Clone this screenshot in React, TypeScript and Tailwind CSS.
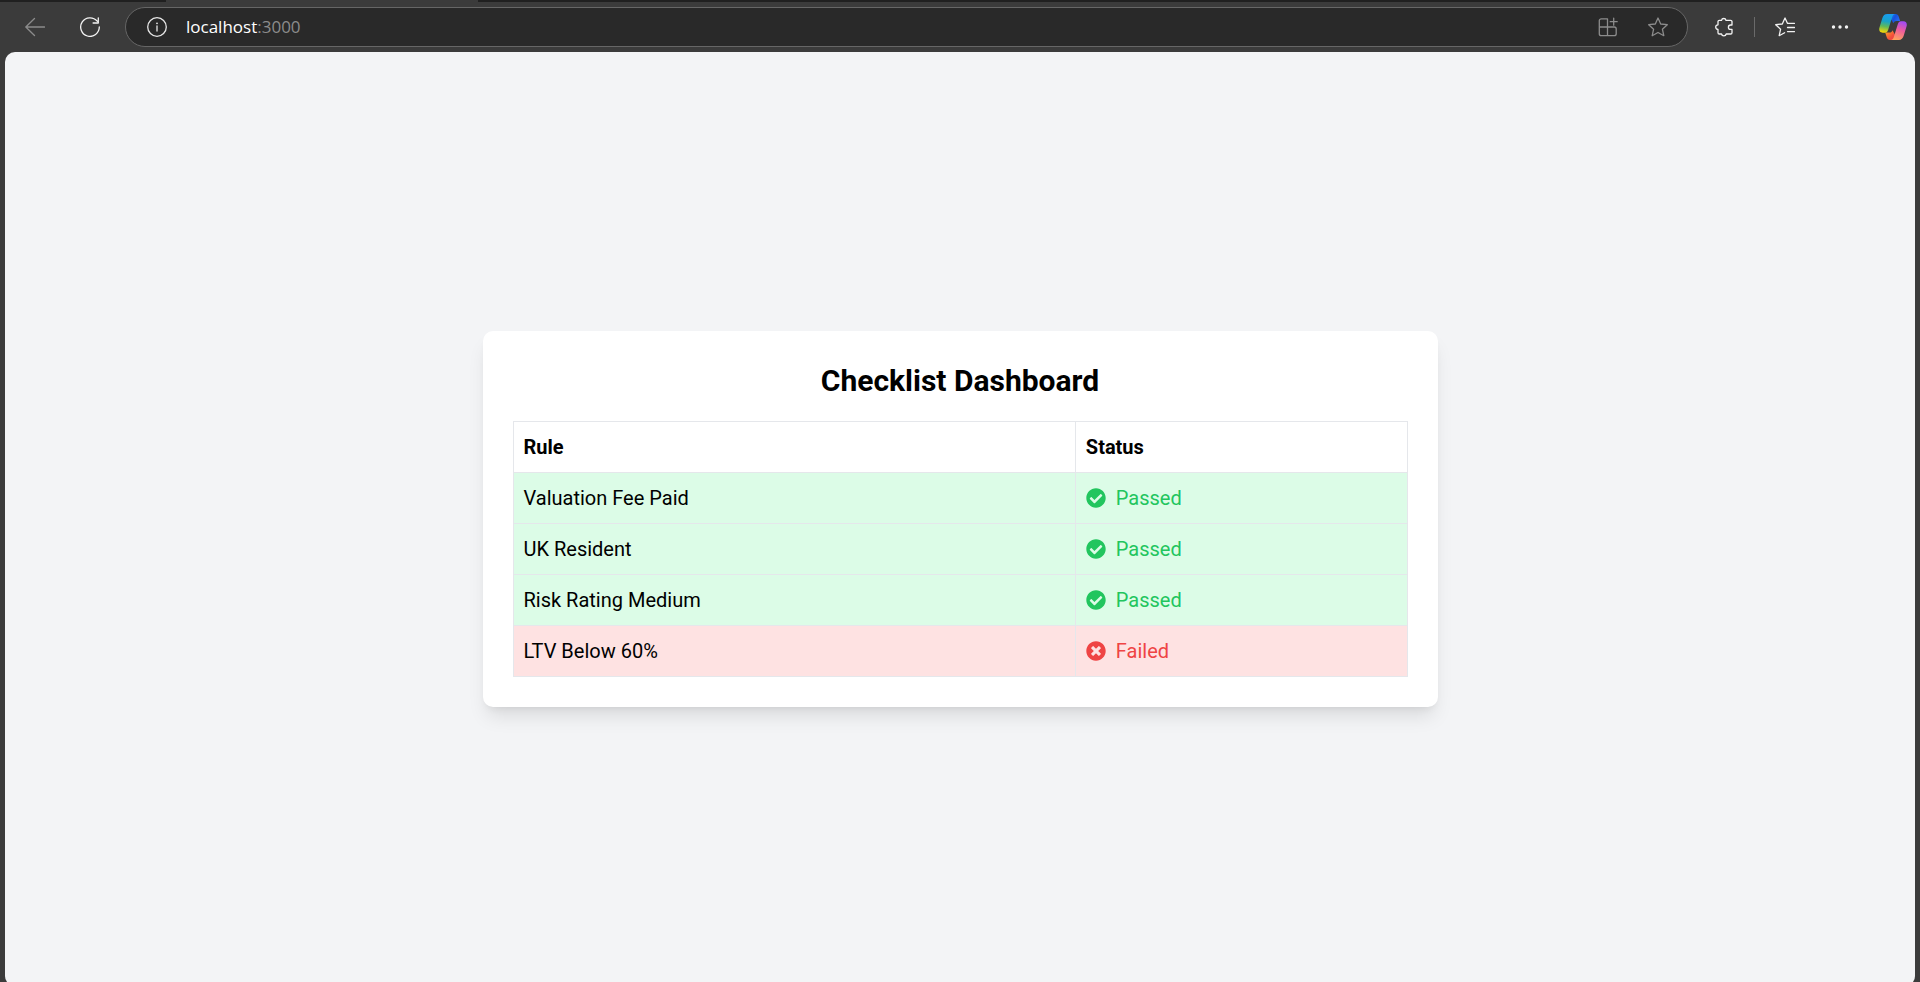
import React from "react";
import { FaCheckCircle, FaTimesCircle } from "react-icons/fa";

type Rule = { name: string; passed: boolean };

const rules: Rule[] = [
  { name: "Valuation Fee Paid", passed: true },
  { name: "UK Resident", passed: true },
  { name: "Risk Rating Medium", passed: true },
  { name: "LTV Below 60%", passed: false },
];

function Icon({ children }: { children: React.ReactNode }) {
  return (
    <svg
      viewBox="0 0 20 20"
      className="size-5 shrink-0"
      fill="none"
      stroke="currentColor"
      strokeWidth="1.3"
      strokeLinecap="round"
      strokeLinejoin="round"
      aria-hidden="true"
    >
      {children}
    </svg>
  );
}

type ToolbarButtonProps = { label: string; dim?: boolean; className?: string; children: React.ReactNode };

function ToolbarButton({ label, dim = false, className = "", children }: ToolbarButtonProps) {
  return (
    <button
      type="button"
      aria-label={label}
      className={`flex size-10 shrink-0 items-center justify-center ${dim ? "text-[#8c8c8c]" : "text-[#f2f2f2]"} ${className}`}
    >
      {children}
    </button>
  );
}

function CopilotLogo() {
  return (
    <svg viewBox="0 0 28 26" className="h-[26px] w-7 shrink-0" aria-hidden="true">
      <defs>
        <linearGradient id="cpLeft" x1="0.55" y1="0" x2="0.4" y2="1">
          <stop offset="0" stopColor="#1a9bf0" />
          <stop offset="0.4" stopColor="#17a3c9" />
          <stop offset="0.68" stopColor="#5fb95a" />
          <stop offset="1" stopColor="#f5d808" />
        </linearGradient>
        <linearGradient id="cpTop" x1="0" y1="0" x2="1" y2="0.6">
          <stop offset="0" stopColor="#1590e8" />
          <stop offset="0.5" stopColor="#1750dc" />
          <stop offset="1" stopColor="#2b6df0" />
        </linearGradient>
        <linearGradient id="cpRight" x1="0.65" y1="0" x2="0.35" y2="1">
          <stop offset="0" stopColor="#a24bf2" />
          <stop offset="0.45" stopColor="#ee5c9c" />
          <stop offset="1" stopColor="#ffa35c" />
        </linearGradient>
        <linearGradient id="cpBottom" x1="0" y1="0" x2="1" y2="1">
          <stop offset="0" stopColor="#ffb01f" />
          <stop offset="0.6" stopColor="#f2503c" />
          <stop offset="1" stopColor="#e8344f" />
        </linearGradient>
      </defs>
      <path d="M11 0h5.600c1.700 0 2.600.9 3.100 2.500l1.400 4.600h-3.600c-1.600 0-2.600.7-3.100 2.200L11 3.400z" fill="url(#cpTop)" />
      <path d="M17 26h-6c-1.700 0-2.700-.9-3.200-2.500L6.200 18.500h4.300c1.600 0 2.500-.8 3-2.300L17 22.500z" fill="url(#cpBottom)" />
      <path d="M8.200 0h8c-1.800.2-2.500 1.500-3 3.100l-4 12.700c-.6 1.900-1.600 2.900-3.200 2.900H3.600C.7 18.700-.3 16.400.4 13.800L3.300 4.200C4.100 1.600 5.700 0 8.200 0z" fill="url(#cpLeft)" />
      <path d="M19.800 26h-8c1.800-.2 2.500-1.500 3-3.100l4-12.700c.6-1.900 1.600-2.900 3.200-2.900h2.400c2.900 0 3.900 2.300 3.200 4.900l-2.900 9.600c-.8 2.600-2.400 4.200-4.900 4.200z" fill="url(#cpRight)" />
    </svg>
  );
}

function BrowserBar() {
  return (
    <header className="shrink-0 bg-[#3b3b3b]">
      <div className="flex h-0.5 justify-between">
        <div className="w-[166px] bg-[#202020]" />
        <div className="ml-[312px] flex-1 bg-[#202020]" />
      </div>
      <div className="flex h-[50px] items-center pr-[7px]">
        <ToolbarButton label="Back" dim className="ml-[15px]">
          <Icon>
            <path d="M19.5 10H.8M9.500 1.500L.8 10l8.700 8.500" />
          </Icon>
        </ToolbarButton>
        <ToolbarButton label="Refresh" className="ml-[15px]">
          <Icon>
            <path d="M17.200 4.200A9.300 9.300 0 1 0 19.300 10M18.300.8v5.200h-5.200" />
          </Icon>
        </ToolbarButton>
        <div className="ml-[15px] flex h-10 min-w-0 flex-1 items-center rounded-full border border-[#666666] bg-[#292929] pr-[9px]">
          <button type="button" aria-label="View site information" className="ml-[21px] flex text-[#e6e6e6]">
            <Icon>
              <circle cx="10" cy="10" r="9.300" />
              <path d="M10 9v5" />
              <circle cx="10" cy="6.300" r="0.9" fill="currentColor" stroke="none" />
            </Icon>
          </button>
          <div className="ml-[19px] flex-1 font-['Open_Sans',sans-serif] text-[17px] leading-6 text-white">
            localhost<span className="text-[#8c8c8c]">:3000</span>
          </div>
          <ToolbarButton label="Install app" dim className="mr-2.5">
            <Icon>
              <path d="M9.500 10V1.800H3.300A2 2 0 0 0 1.300 3.800V16.700a2 2 0 0 0 2 2H16.200a2 2 0 0 0 2-2V12a2 2 0 0 0-2-2H1.300M9.500 10v8.700M15.700 1.200v7M12.200 4.700h7" />
            </Icon>
          </ToolbarButton>
          <ToolbarButton label="Add to favorites" dim>
            <Icon>
              <path d="M10 1l2.700 6 6.600.7-4.900 4.500 1.400 6.500L10 15.500l-5.800 3.200 1.400-6.500L.7 7.700 7.300 7z" />
            </Icon>
          </ToolbarButton>
        </div>
        <ToolbarButton label="Extensions" className="ml-4">
          <Icon>
            <path d="M5.300 3.300H7.500A2.300 2.300 0 0 1 12 3.300H16.700A1.300 1.300 0 0 1 18 4.600V8H16.600A2.200 2.200 0 0 0 16.600 12.400H18V15.700A1.300 1.300 0 0 1 16.700 17H12.200A2.400 2.400 0 0 1 7.500 17H5.300A1.300 1.300 0 0 1 4 15.700V12.400A2.300 2.300 0 0 1 4 7.800V4.600A1.300 1.300 0 0 1 5.300 3.300z" />
          </Icon>
        </ToolbarButton>
        <div className="ml-2.5 h-5 w-px bg-[#6a6a6a]" />
        <ToolbarButton label="Favorites" className="ml-2.5">
          <Icon>
            <path d="M12.400 6.300L10 1 7.300 7 .7 7.700l4.900 4.500-1.400 6.500L9.600 15.800M13 6.400h6.500M12.500 10.500h7M12.500 14.600h7" />
          </Icon>
        </ToolbarButton>
        <ToolbarButton label="Settings and more" className="ml-[15px]">
          <Icon>
            <g fill="currentColor" stroke="none">
              <circle cx="3.500" cy="10" r="1.700" />
              <circle cx="10" cy="10" r="1.700" />
              <circle cx="16.500" cy="10" r="1.700" />
            </g>
          </Icon>
        </ToolbarButton>
        <ToolbarButton label="Copilot" className="ml-[13px]">
          <CopilotLogo />
        </ToolbarButton>
      </div>
    </header>
  );
}

function Checklist() {
  return (
    <section className="w-1/2 rounded-[10px] bg-white p-[30px] shadow-[0_13px_19px_-4px_rgb(0_0_0/0.1),0_5px_8px_-5px_rgb(0_0_0/0.1)]">
      <h1 className="mb-5 text-center text-[30px] leading-10 font-bold">Checklist Dashboard</h1>
      <table className="w-full border-collapse border border-[#e5e7eb] text-left text-xl leading-[30px]">
        <thead>
          <tr>
            <th className="w-[62.9%] border border-[#e5e7eb] p-2.5 font-bold">Rule</th>
            <th className="border border-[#e5e7eb] p-2.5 font-bold">Status</th>
          </tr>
        </thead>
        <tbody>
          {rules.map((rule) => (
            <tr key={rule.name} className={rule.passed ? "bg-[#dcfce7]" : "bg-[#fee2e2]"}>
              <td className="border border-[#e5e7eb] p-2.5">{rule.name}</td>
              <td className="border border-[#e5e7eb] p-2.5">
                <div className={rule.passed ? "flex items-center gap-2.5 text-[#22c55e]" : "flex items-center gap-2.5 text-[#ef4444]"}>
                  {rule.passed ? <FaCheckCircle className="size-5" /> : <FaTimesCircle className="size-5" />}
                  <span>{rule.passed ? "Passed" : "Failed"}</span>
                </div>
              </td>
            </tr>
          ))}
        </tbody>
      </table>
    </section>
  );
}

export default function App() {
  return (
    <div className="flex h-screen flex-col overflow-hidden bg-[#3b3b3b] font-[Roboto,sans-serif] text-black">
      <BrowserBar />
      <main className="mx-[5px] -mb-1 flex flex-1 items-center justify-center rounded-[10px] bg-[#f3f4f6]">
        <Checklist />
      </main>
    </div>
  );
}
